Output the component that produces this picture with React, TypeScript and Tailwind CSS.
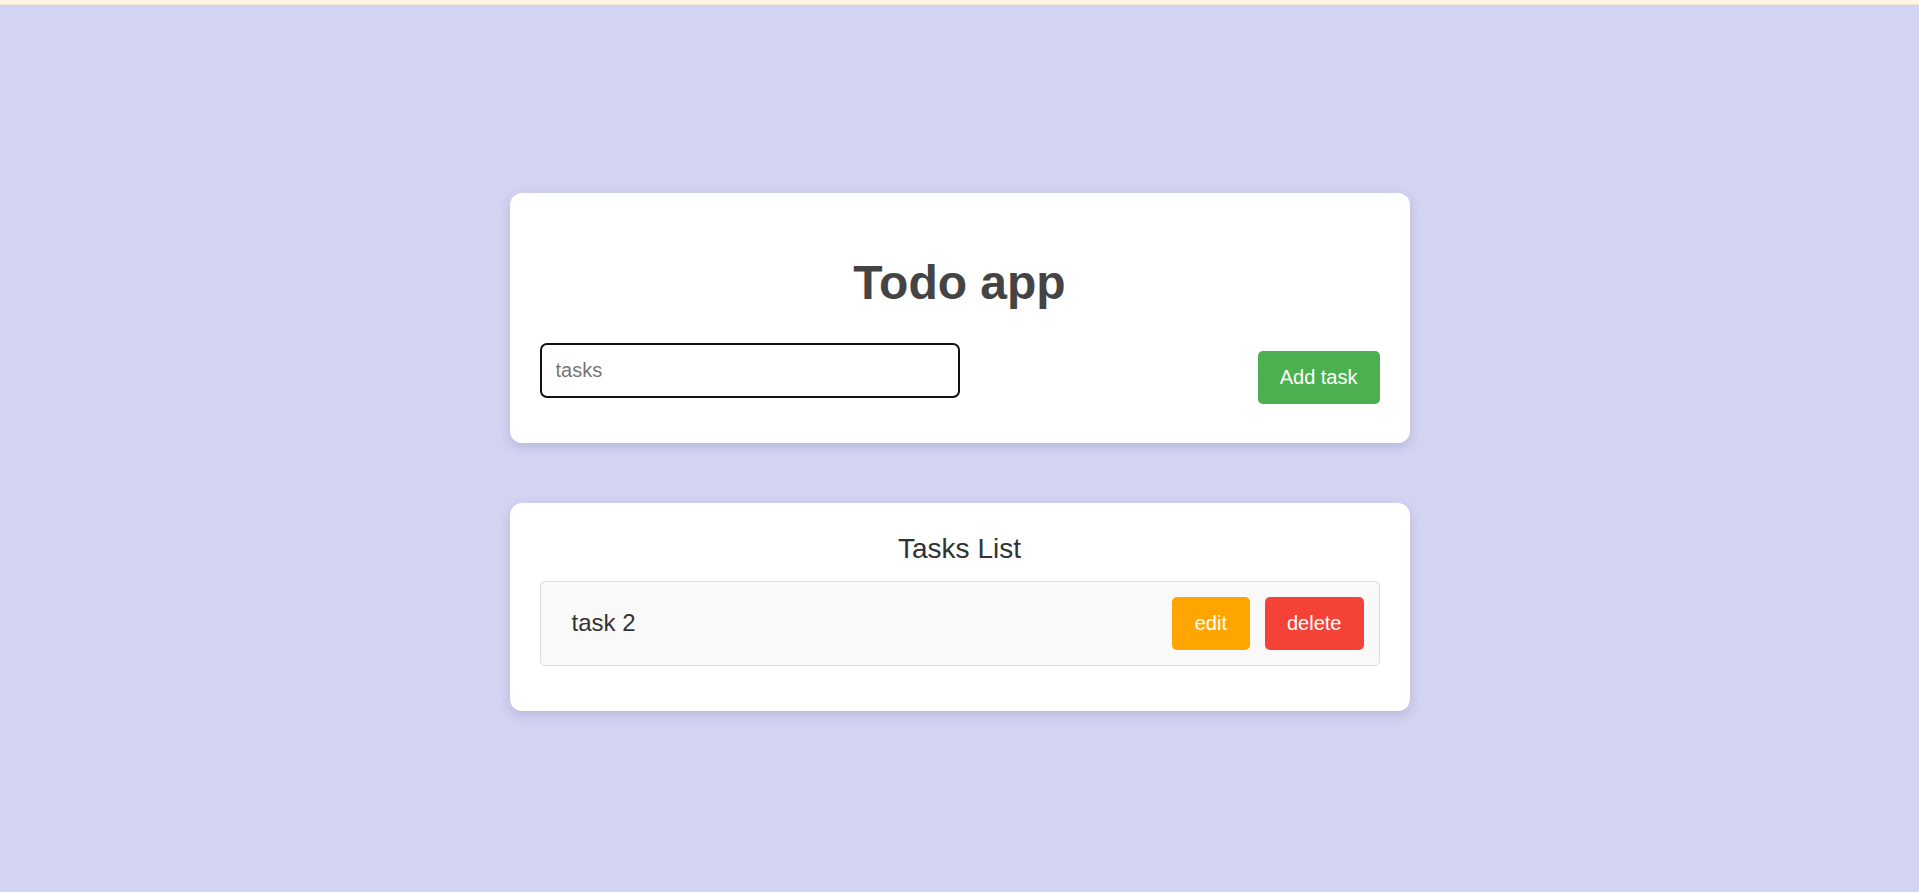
import { useState } from "react";

type Task = { id: number; text: string };

function App() {
  const [tasks] = useState<Task[]>([{ id: 2, text: "task 2" }]);

  return (
    <div
      className="min-h-screen flex flex-col bg-[#d3d3f2]"
      style={{ fontFamily: '"Liberation Sans", Arial, sans-serif' }}
    >
      {/* top strip */}
      <div className="h-[5px] bg-[#fff6e6] border-b border-[#ece6d6]" />

      <div className="flex-1 flex flex-col items-center justify-center gap-[60px] pt-[6px]">
        {/* Add task card */}
        <div className="w-[900px] bg-white rounded-xl px-[30px] pt-[30px] pb-[39px] shadow-[0_4px_12px_rgba(60,60,120,0.18)]">
          <h1 className="mt-[32px] mb-[33px] text-center text-[48px] leading-[55px] font-bold text-[#444]">
            Todo app
          </h1>
          <div className="flex justify-between items-start">
            <input
              type="text"
              placeholder="tasks"
              className="w-[420px] h-[55px] border-2 border-[#111] rounded-[7px] px-[14px] text-[20px] text-[#333] placeholder:text-[#757575] outline-none"
            />
            <button className="mt-[8px] h-[53px] px-[22px] text-[20px] leading-[23px] text-white bg-[#4caf50] rounded-[5px]">
              Add task
            </button>
          </div>
        </div>

        {/* Tasks list card */}
        <div className="w-[900px] bg-white rounded-xl px-[30px] pt-[30px] pb-[45px] shadow-[0_4px_12px_rgba(60,60,120,0.18)]">
          <h2 className="text-center text-[28px] leading-[32px] text-[#333] mb-[16px]">
            Tasks List
          </h2>
          {tasks.map((t) => (
            <div
              key={t.id}
              className="flex items-center justify-between h-[85px] bg-[#f9f9f9] border border-[#ddd] rounded-[5px] pl-[31px] pr-[15px]"
            >
              <span className="text-[24px] text-[#333]">{t.text}</span>
              <div className="flex gap-[15px]">
                <button className="h-[53px] px-[23px] text-[20px] leading-[23px] text-white bg-[#ffa500] rounded-[5px]">
                  edit
                </button>
                <button className="h-[53px] px-[22px] text-[20px] leading-[23px] text-white bg-[#f44336] rounded-[5px]">
                  delete
                </button>
              </div>
            </div>
          ))}
        </div>
      </div>
    </div>
  );
}

export default App;
